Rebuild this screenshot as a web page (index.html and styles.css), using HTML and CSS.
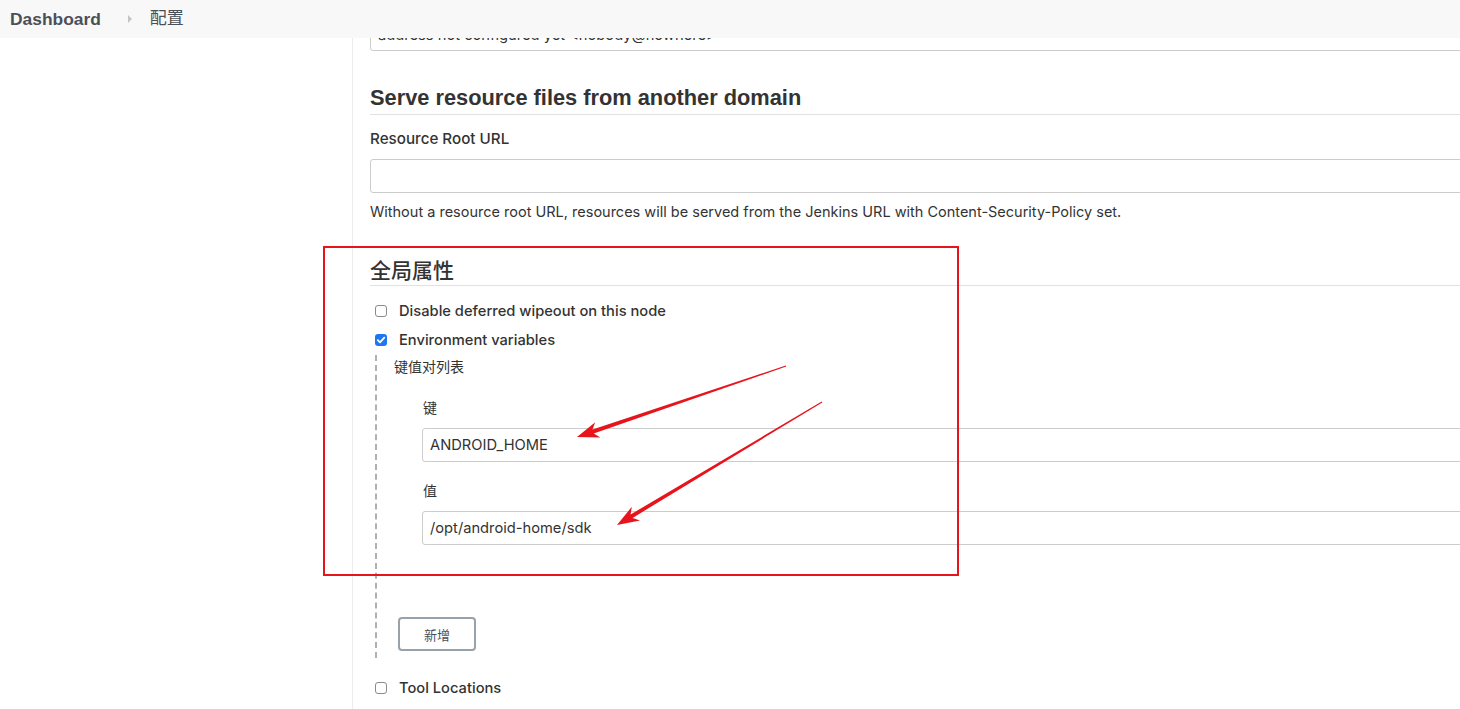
FILE: index.html
```html
<!DOCTYPE html>
<html lang="zh">
<head>
<meta charset="utf-8">
<title>配置</title>
<link rel="stylesheet" href="styles.css">
</head>
<body>
<header class="topbar">
  <span class="crumb crumb-root">Dashboard</span>
  <span class="crumb-sep"></span>
  <span class="crumb">配置</span>
</header>
<div class="layout">
  <aside class="sidebar"></aside>
  <main class="main">
    <div class="input input-clipped"><span class="input-text">address not configured yet &lt;nobody@nowhere&gt;</span></div>

    <h2 class="section-title">Serve resource files from another domain</h2>
    <div class="field-label">Resource Root URL</div>
    <div class="input"></div>
    <div class="help">Without a resource root URL, resources will be served from the Jenkins URL with Content-Security-Policy set.</div>

    <h2 class="section-title section-title-cjk">全局属性</h2>
    <div class="check-row first">
      <span class="box"></span>
      <span class="check-label">Disable deferred wipeout on this node</span>
    </div>
    <div class="check-row">
      <span class="box checked"><svg viewBox="0 0 12 12" width="12" height="12"><path d="M2.8 6.2 L5 8.4 L9.3 3.6" fill="none" stroke="#fff" stroke-width="1.8" stroke-linecap="round" stroke-linejoin="round"/></svg></span>
      <span class="check-label">Environment variables</span>
    </div>
    <div class="nested">
      <div class="nested-title">键值对列表</div>
      <div class="kv">
        <div class="kv-label">键</div>
        <div class="input"><span class="input-text">ANDROID_HOME</span></div>
        <div class="kv-label second">值</div>
        <div class="input"><span class="input-text">/opt/android-home/sdk</span></div>
      </div>
      <button class="btn">新增</button>
    </div>
    <div class="check-row last">
      <span class="box"></span>
      <span class="check-label">Tool Locations</span>
    </div>
  </main>
</div>

<div class="annot-box"></div>
<svg class="annot-arrows" width="1460" height="709" viewBox="0 0 1460 709">
  <polygon fill="#e8141c" points="786.2,366.5 593.7,433.4 600.4,437.5 577,437 595.2,422.3 592.5,429.6 785.8,365.5"/>
  <polygon fill="#e8141c" points="822.3,402.4 632.6,517.9 640.0,520.6 617,525 631.8,506.8 630.6,514.5 821.7,401.6"/>
</svg>
</body>
</html>
```
FILE: styles.css
```css
html, body {
  margin: 0;
  padding: 0;
  background: #fff;
  overflow: hidden;
  width: 1460px;
  height: 709px;
}
body {
  position: relative;
  font-family: Inter, "Liberation Sans", "Noto Sans CJK SC", sans-serif;
  color: #333;
}
.topbar {
  position: absolute;
  top: 0;
  left: 0;
  right: 0;
  height: 38px;
  background: #f8f8f8;
  z-index: 5;
  display: flex;
  align-items: center;
  padding-left: 10px;
  box-sizing: border-box;
}
.crumb {
  font-size: 17px;
  color: #4b5058;
  font-family: "Liberation Sans", "Noto Sans CJK SC", sans-serif;
  line-height: 20px;
}
.crumb-root {
  font-weight: bold;
  font-size: 17.4px;
}
.crumb-sep {
  width: 0;
  height: 0;
  border-top: 4px solid transparent;
  border-bottom: 4px solid transparent;
  border-left: 4px solid #c4c4c4;
  margin: 0 18px 0 27px;
}
.layout {
  display: flex;
  height: 709px;
}
.sidebar {
  width: 352px;
  flex: none;
  border-right: 1px solid #ececec;
}
.main {
  flex: none;
  width: 1400px;
  padding: 17px 0 0 17px;
}
.input {
  box-sizing: border-box;
  height: 34px;
  border: 1px solid #ccc;
  border-radius: 3px;
  display: flex;
  align-items: center;
  padding-left: 7px;
  font-size: 14.7px;
  color: #333;
}
.input-clipped {
  padding-top: 2px;
}
.section-title {
  font-family: "Liberation Sans", sans-serif;
  font-size: 21.8px;
  font-weight: bold;
  line-height: 25px;
  margin: 34px 0 0 0;
  padding-bottom: 4px;
  border-bottom: 1px solid #e2e2e2;
  color: #333;
}
.section-title-cjk {
  font-family: "Noto Sans CJK SC", sans-serif;
  font-size: 21px;
  font-weight: 500;
  margin-top: 35px;
  padding-bottom: 3px;
}
.field-label {
  font-size: 15.2px;
  font-weight: 500;
  line-height: 20px;
  margin: 14px 0 10px 0;
  color: #333;
}
.help {
  font-size: 14.5px;
  line-height: 20px;
  margin-top: 9px;
  color: #333;
}
.check-row {
  display: flex;
  align-items: center;
  height: 20px;
  margin-top: 9px;
}
.check-row.first {
  margin-top: 15px;
}
.check-row.last {
  margin-top: 20px;
}
.box {
  width: 12px;
  height: 12px;
  box-sizing: border-box;
  border: 1px solid #8b8b8b;
  border-radius: 3px;
  margin-left: 5px;
  margin-right: 12px;
  flex: none;
  display: flex;
}
.box.checked {
  border: none;
  background: #1e76f1;
}
.check-label {
  font-size: 14.7px;
  font-weight: 500;
  line-height: 20px;
  color: #333;
}
.nested {
  margin-left: 5px;
  margin-top: 5px;
  border-left: 2px dashed #b0b0b0;
  padding: 1px 0 7px 17px;
}
.nested-title {
  font-family: "Noto Sans CJK SC", sans-serif;
  font-size: 14px;
  line-height: 20px;
}
.kv {
  padding-left: 28px;
  padding-top: 21px;
}
.kv-label {
  font-family: "Noto Sans CJK SC", sans-serif;
  font-size: 14px;
  line-height: 20px;
  margin-bottom: 11px;
  padding-left: 1px;
}
.kv-label.second {
  margin-top: 18px;
}
.btn {
  display: block;
  box-sizing: border-box;
  margin: 72px 0 0 4px;
  width: 78px;
  height: 34px;
  border: 2px solid #97a2ab;
  border-radius: 4px;
  background: #fff;
  font-family: "Noto Sans CJK SC", sans-serif;
  font-size: 13px;
  color: #4b5058;
  padding: 0;
}
.annot-box {
  position: absolute;
  left: 323px;
  top: 246px;
  width: 636px;
  height: 330px;
  box-sizing: border-box;
  border: 2px solid #e8141c;
  z-index: 3;
  pointer-events: none;
}
.annot-arrows {
  position: absolute;
  left: 0;
  top: 0;
  z-index: 4;
  pointer-events: none;
}
```
